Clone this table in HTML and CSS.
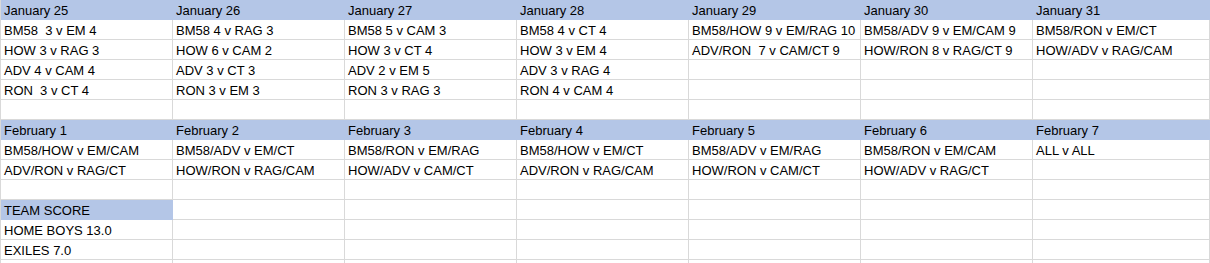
FILE: index.html
```html
<!DOCTYPE html>
<html>
<head>
<meta charset="utf-8">
<link rel="stylesheet" href="styles.css">
</head>
<body>
<div class="sheet">
  <div class="c h">January 25</div><div class="c h">January 26</div><div class="c h">January 27</div><div class="c h">January 28</div><div class="c h">January 29</div><div class="c h">January 30</div><div class="c h">January 31</div>

  <div class="c">BM58  3 v EM 4</div><div class="c">BM58 4 v RAG 3</div><div class="c">BM58 5 v CAM 3</div><div class="c">BM58 4 v CT 4</div><div class="c">BM58/HOW 9 v EM/RAG 10</div><div class="c">BM58/ADV 9 v EM/CAM 9</div><div class="c">BM58/RON v EM/CT</div>

  <div class="c">HOW 3 v RAG 3</div><div class="c">HOW 6 v CAM 2</div><div class="c">HOW 3 v CT 4</div><div class="c">HOW 3 v EM 4</div><div class="c">ADV/RON  7 v CAM/CT 9</div><div class="c">HOW/RON 8 v RAG/CT 9</div><div class="c">HOW/ADV v RAG/CAM</div>

  <div class="c">ADV 4 v CAM 4</div><div class="c">ADV 3 v CT 3</div><div class="c">ADV 2 v EM 5</div><div class="c">ADV 3 v RAG 4</div><div class="c"></div><div class="c"></div><div class="c"></div>

  <div class="c">RON  3 v CT 4</div><div class="c">RON 3 v EM 3</div><div class="c">RON 3 v RAG 3</div><div class="c">RON 4 v CAM 4</div><div class="c"></div><div class="c"></div><div class="c"></div>

  <div class="c"></div><div class="c"></div><div class="c"></div><div class="c"></div><div class="c"></div><div class="c"></div><div class="c"></div>

  <div class="c h">February 1</div><div class="c h">February 2</div><div class="c h">February 3</div><div class="c h">February 4</div><div class="c h">February 5</div><div class="c h">February 6</div><div class="c h">February 7</div>

  <div class="c">BM58/HOW v EM/CAM</div><div class="c">BM58/ADV v EM/CT</div><div class="c">BM58/RON v EM/RAG</div><div class="c">BM58/HOW v EM/CT</div><div class="c">BM58/ADV v EM/RAG</div><div class="c">BM58/RON v EM/CAM</div><div class="c">ALL v ALL</div>

  <div class="c">ADV/RON v RAG/CT</div><div class="c">HOW/RON v RAG/CAM</div><div class="c">HOW/ADV v CAM/CT</div><div class="c">ADV/RON v RAG/CAM</div><div class="c">HOW/RON v CAM/CT</div><div class="c">HOW/ADV v RAG/CT</div><div class="c"></div>

  <div class="c"></div><div class="c"></div><div class="c"></div><div class="c"></div><div class="c"></div><div class="c"></div><div class="c"></div>

  <div class="c h">TEAM SCORE</div><div class="c"></div><div class="c"></div><div class="c"></div><div class="c"></div><div class="c"></div><div class="c"></div>

  <div class="c">HOME BOYS 13.0</div><div class="c"></div><div class="c"></div><div class="c"></div><div class="c"></div><div class="c"></div><div class="c"></div>

  <div class="c">EXILES 7.0</div><div class="c"></div><div class="c"></div><div class="c"></div><div class="c"></div><div class="c"></div><div class="c"></div>

  <div class="c"></div><div class="c"></div><div class="c"></div><div class="c"></div><div class="c"></div><div class="c"></div><div class="c"></div>
</div>
</body>
</html>
```

FILE: styles.css
```css
html, body {
  margin: 0;
  padding: 0;
  background: #ffffff;
  overflow: hidden;
}

.sheet {
  display: grid;
  grid-template-columns: repeat(6, 172px) 1fr;
  grid-auto-rows: 20px;
  border-left: 1px solid #d9d9d9;
  width: 1209px;
  height: 263px;
  overflow: hidden;
  font-family: "Liberation Sans", Arial, sans-serif;
  font-size: 13px;
  color: #000000;
}

.c {
  box-sizing: border-box;
  border-right: 1px solid #d9d9d9;
  border-bottom: 1px solid #d9d9d9;
  padding: 2px 0 0 3px;
  line-height: 17px;
  white-space: pre;
  overflow: hidden;
}

.h {
  background: #b4c6e7;
  border-right-color: #b4c6e7;
  border-bottom-color: #b4c6e7;
}
```
